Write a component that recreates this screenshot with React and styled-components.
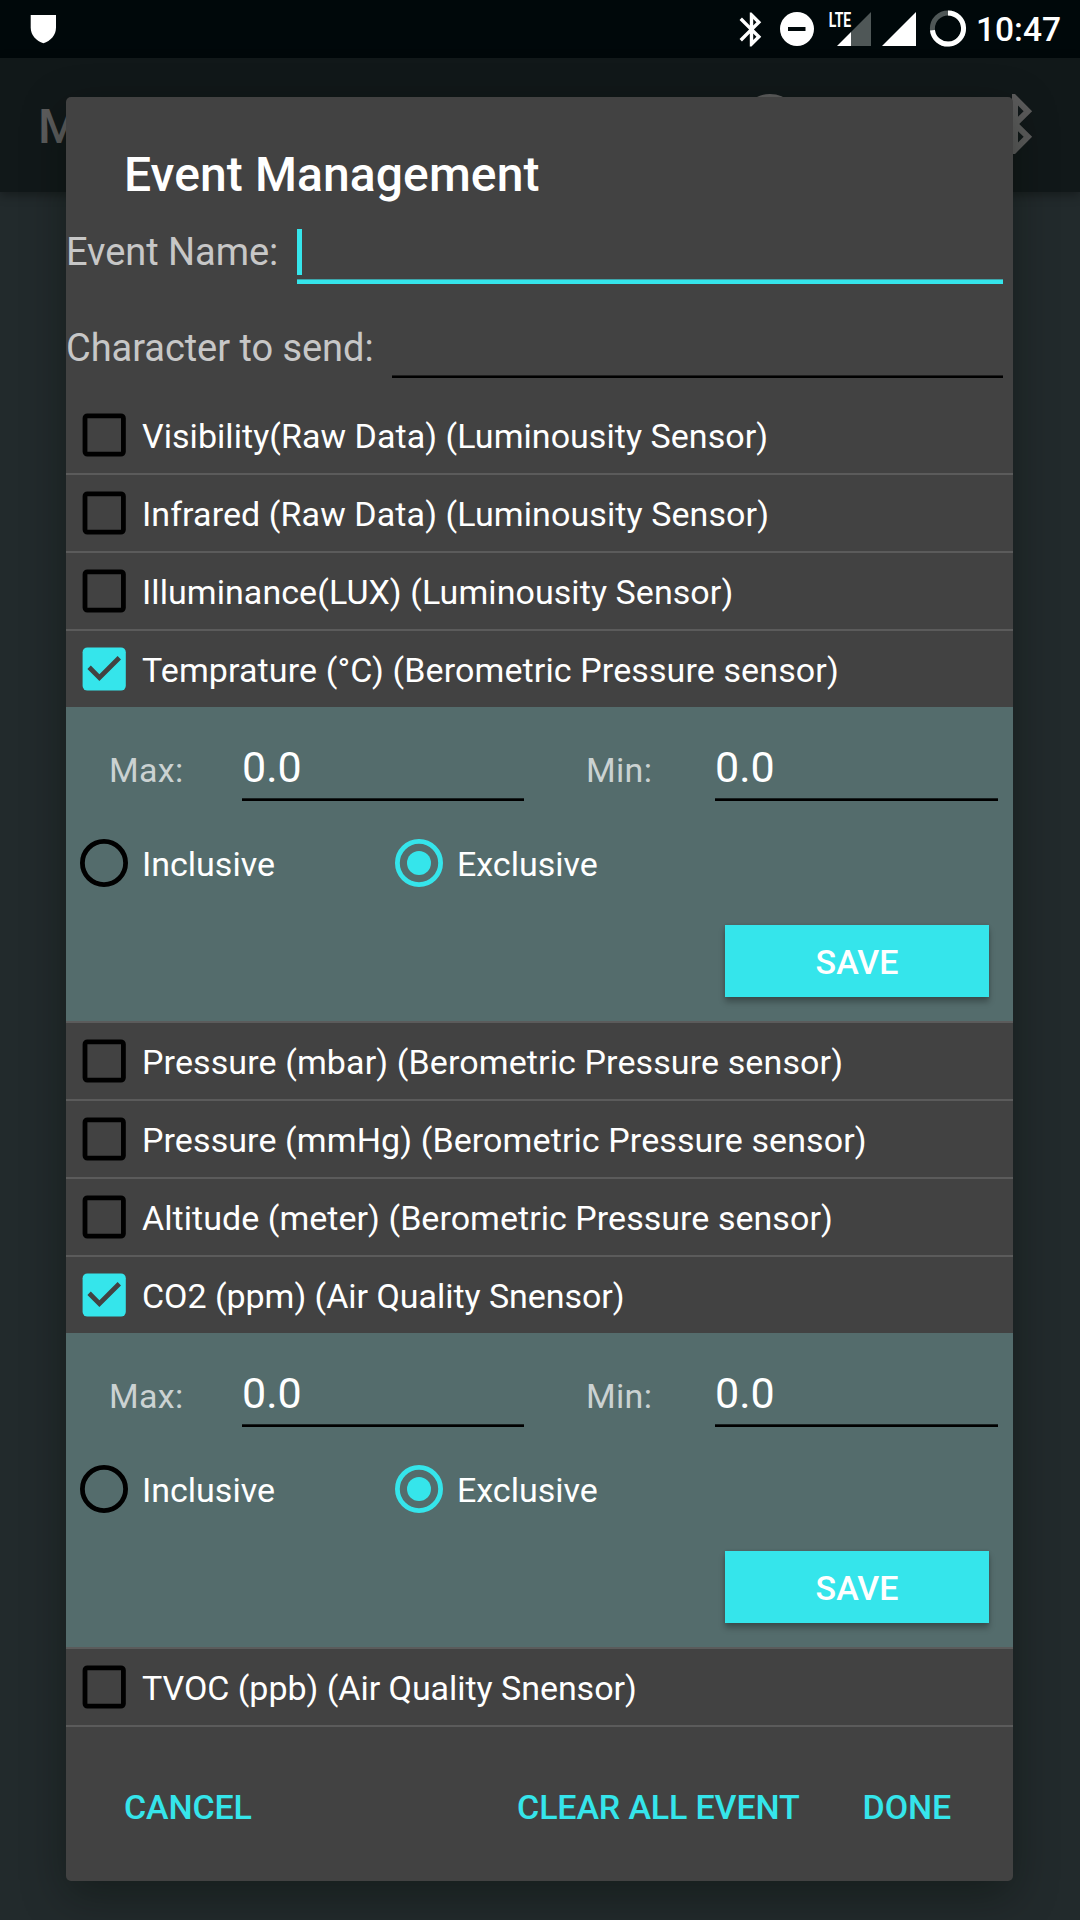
import React, { useState } from 'react';
import styled, { createGlobalStyle } from 'styled-components';

const accent = '#35e5eb';
const surface = '#424242';

const GlobalStyle = createGlobalStyle`
  * { box-sizing: border-box; }
  body {
    margin: 0;
    background: #222a2c;
    font-family: Roboto, "Noto Sans", sans-serif;
    color: #fff;
  }
`;

const Screen = styled.div`
  position: relative;
  width: 1080px;
  height: 1920px;
  overflow: hidden;
  background: #222a2c;
`;

const StatusBar = styled.header`
  display: flex;
  align-items: center;
  height: 58px;
  padding: 0 18px 0 30px;
  background: #00080a;
`;

const StatusIcons = styled.div`
  display: flex;
  align-items: center;
  height: 58px;
  margin-left: auto;
`;

const Clock = styled.time`
  margin-left: 9px;
  padding-top: 2px;
  width: 86px;
  font-size: 33.5px;
  line-height: 40px;
  font-weight: 500;
`;

const AppBar = styled.div`
  display: flex;
  align-items: center;
  height: 134px;
  padding: 0 29px 2px 37px;
  background: #111819;
  color: #5c5c5c;
  box-shadow: 0 3px 10px rgba(0, 0, 0, 0.35);
`;

const AppTitle = styled.h1`
  margin: 0;
  padding: 4px 0 0 1px;
  font-size: 48px;
  line-height: 57px;
  font-weight: 500;
`;

const AppActions = styled.div`
  display: flex;
  gap: 173px;
  margin-left: auto;
`;

const Overlay = styled.div`
  position: absolute;
  inset: 0;
  padding: 97px 67px 39px 66px;
`;

const Dialog = styled.section`
  height: 1784px;
  border-radius: 5px;
  background: ${surface};
  box-shadow: 0 14px 44px rgba(0, 10, 0, 0.36);
`;

const DialogTitle = styled.h2`
  margin: 0;
  padding: 49px 58px 0;
  font-size: 48px;
  line-height: 57px;
  font-weight: 500;
  letter-spacing: 0.1px;
`;

const Field = styled.label`
  display: flex;
  height: ${(p) => p.$height}px;
  padding-right: 10px;
`;

const FieldLabel = styled.span`
  width: ${(p) => p.$width}px;
  padding-top: 27px;
  font-size: 38px;
  line-height: 44px;
  letter-spacing: -0.05px;
  color: #c7c7c7;
  white-space: nowrap;
`;

const FieldInput = styled.div`
  flex: 1;
  height: ${(p) => (p.$active ? 81 : 79)}px;
  padding-top: 26px;
  background: ${(p) =>
    p.$active
      ? `linear-gradient(#3ca5a9 1px, ${accent} 1px) bottom / 100% 5px no-repeat`
      : 'linear-gradient(#1d1d1d 1px, #000 1px) bottom / 100% 3px no-repeat'};
`;

const Caret = styled.div`
  width: 5px;
  height: 46px;
  background: ${accent};
`;

const Item = styled.label`
  display: flex;
  align-items: center;
  gap: 16px;
  height: ${(p) => (p.$open ? 76 : 78)}px;
  padding-left: 16px;
  border-bottom: ${(p) => (p.$open ? 'none' : '2px solid #5b5b5b')};
`;

const ItemText = styled.span`
  padding-top: 2px;
  font-size: 34px;
  line-height: 40px;
  letter-spacing: ${(p) => p.$tracking || 0}px;
  white-space: nowrap;
`;

const Panel = styled.div`
  height: 316px;
  border-bottom: 2px solid #5b5b5b;
  background: #546c6c;
`;

const Limits = styled.div`
  display: flex;
  height: 94px;
`;

const LimitLabel = styled.span`
  width: ${(p) => p.$width}px;
  padding: 43px 0 0 ${(p) => p.$indent}px;
  font-size: 34px;
  line-height: 40px;
  letter-spacing: 0.3px;
  color: #cbd2d2;
`;

const LimitValue = styled.span`
  width: ${(p) => p.$width}px;
  padding-top: 35px;
  font-size: 43px;
  line-height: 50px;
  background: linear-gradient(#182020 1px, #000 1px) bottom / 100% 3px no-repeat;
`;

const Modes = styled.div`
  display: flex;
  padding: 38px 0 38px 14px;
`;

const Mode = styled.label`
  display: flex;
  align-items: center;
  gap: 14px;
  width: 315px;
  height: 48px;
`;

const SaveRow = styled.div`
  display: flex;
  justify-content: flex-end;
  padding-right: 24px;
`;

const SaveButton = styled.button`
  width: 264px;
  height: 72px;
  padding: 2px 0 0;
  border: 0;
  background: ${accent};
  color: #fff;
  font: 500 34px/40px Roboto, sans-serif;
  box-shadow: 0 5px 6px rgba(0, 0, 0, 0.28), 0 0 3px rgba(0, 0, 0, 0.12);
`;

const Footer = styled.footer`
  display: flex;
  padding: 60px 62px 0 58px;
`;

const TextButton = styled.button`
  margin-left: ${(p) => p.$before || '0'};
  padding: 0;
  border: 0;
  background: none;
  color: ${accent};
  font: 500 34px/40px Roboto, sans-serif;
  letter-spacing: -0.14px;
  white-space: nowrap;
`;

const Drawing = styled.svg`
  display: block;
  flex: none;
  overflow: visible;
  margin-left: ${(p) => p.$before || 0}px;
`;

const BluetoothIcon = ({ size, before }) => (
  <Drawing $before={before} width={size} height={size} viewBox="0 0 24 24" fill="currentColor">
    <path d="M17.71 7.71L12 2h-1v7.59L6.41 5 5 6.41 10.59 12 5 17.59 6.41 19 11 14.41V22h1l5.71-5.71-4.3-4.29 4.3-4.29zM13 5.83l1.88 1.88L13 9.59V5.83zm1.88 10.46L13 18.17v-3.76l1.88 1.88z" />
  </Drawing>
);

const ShieldIcon = () => (
  <Drawing width="26" height="30" viewBox="0 0 26 30" fill="#fff">
    <path d="M.7 1H26v12.500C26 21.500 20.500 26.800 13.400 29.300 6.300 26.800.7 21.500.7 13.500z" />
  </Drawing>
);

const DndIcon = () => (
  <Drawing $before={8} width="34" height="34" viewBox="0 0 34 34">
    <circle cx="17" cy="17" r="17" fill="#fff" />
    <path d="M8 15h17.500v4H8z" fill="#00080a" />
  </Drawing>
);

const LteIcon = () => (
  <Drawing $before={14} width="44" height="46" viewBox="0 -6 44 46">
    <path d="M43 0V34H23V20z" fill="#4f5757" />
    <path d="M9 34L23 20V34z" fill="#fff" />
    <text x="0.700" y="15.300" fill="#fff" fontSize="20.500" fontWeight="700" textLength="22.500" lengthAdjust="spacingAndGlyphs">LTE</text>
  </Drawing>
);

const SignalIcon = () => (
  <Drawing $before={10} width="34" height="34" viewBox="0 0 34 34">
    <path d="M34 0V34H0z" fill="#fff" />
  </Drawing>
);

const BatteryIcon = () => (
  <Drawing $before={13} width="38" height="38" viewBox="0 0 38 38" fill="none" strokeWidth="5">
    <circle cx="19" cy="18.500" r="15.600" stroke="#4f5757" />
    <path d="M19 2.900A15.600 15.600 0 1 1 3.450 20.200" stroke="#fff" />
  </Drawing>
);

const InfoIcon = () => (
  <Drawing width="72" height="72" viewBox="0 0 24 24" fill="none" stroke="currentColor" strokeWidth="2">
    <circle cx="12" cy="12" r="9" />
  </Drawing>
);

const Checkbox = ({ checked }) => (
  <Drawing width="44" height="44" viewBox="0 0 44 44">
    {checked ? (
      <>
        <rect x=".6" y=".4" width="43.200" height="43.200" rx="4.800" fill={accent} />
        <path d="M17.400 34L5.400 22l3.400-3.400 8.600 8.600L35.600 9 39 12.400z" fill={surface} />
      </>
    ) : (
      <rect x="3" y="2.800" width="38.400" height="38.400" rx="2.400" fill="none" stroke="#000" strokeWidth="4.800" />
    )}
  </Drawing>
);

const Radio = ({ checked }) => (
  <Drawing width="48" height="48" viewBox="0 0 48 48">
    <circle cx="24" cy="24" r="21.600" fill="none" stroke={checked ? accent : '#000'} strokeWidth="4.800" />
    {checked && <circle cx="24" cy="24" r="12" fill={accent} />}
  </Drawing>
);

const ThresholdPanel = () => (
  <Panel>
    <Limits>
      <LimitLabel $width={176} $indent={43}>Max:</LimitLabel>
      <LimitValue $width={282}>0.0</LimitValue>
      <LimitLabel $width={191} $indent={62}>Min:</LimitLabel>
      <LimitValue $width={283}>0.0</LimitValue>
    </Limits>
    <Modes>
      <Mode><Radio /><ItemText>Inclusive</ItemText></Mode>
      <Mode><Radio checked /><ItemText>Exclusive</ItemText></Mode>
    </Modes>
    <SaveRow><SaveButton>SAVE</SaveButton></SaveRow>
  </Panel>
);

const sensors = [
  { name: 'Visibility(Raw Data) (Luminousity Sensor)', tracking: 0.045 },
  { name: 'Infrared (Raw Data) (Luminousity Sensor)', tracking: 0.09 },
  { name: 'Illuminance(LUX) (Luminousity Sensor)', tracking: 0.065 },
  { name: 'Temprature (°C) (Berometric Pressure sensor)', tracking: 0.11, on: true },
  { name: 'Pressure (mbar) (Berometric Pressure sensor)', tracking: 0.11 },
  { name: 'Pressure (mmHg) (Berometric Pressure sensor)', tracking: 0.1 },
  { name: 'Altitude (meter) (Berometric Pressure sensor)', tracking: 0.04 },
  { name: 'CO2 (ppm) (Air Quality Snensor)', tracking: -0.04, on: true },
  { name: 'TVOC (ppb) (Air Quality Snensor)', tracking: -0.04 },
];

export default function App() {
  const [open, setOpen] = useState(() => sensors.map((s) => Boolean(s.on)));
  const toggle = (i) => setOpen((prev) => prev.map((v, j) => (j === i ? !v : v)));

  return (
    <>
      <GlobalStyle />
      <Screen>
        <StatusBar>
          <ShieldIcon />
          <StatusIcons>
            <BluetoothIcon size={41} />
            <DndIcon />
            <LteIcon />
            <SignalIcon />
            <BatteryIcon />
            <Clock>10:47</Clock>
          </StatusIcons>
        </StatusBar>
        <AppBar>
          <AppTitle>M</AppTitle>
          <AppActions>
            <InfoIcon />
            <BluetoothIcon size={72} />
          </AppActions>
        </AppBar>
        <Overlay>
          <Dialog>
            <DialogTitle>Event Management</DialogTitle>
            <Field $height={96}>
              <FieldLabel $width={231}>Event Name:</FieldLabel>
              <FieldInput $active><Caret /></FieldInput>
            </Field>
            <Field $height={98}>
              <FieldLabel $width={326}>Character to send:</FieldLabel>
              <FieldInput />
            </Field>
            {sensors.map((s, i) => (
              <React.Fragment key={s.name}>
                <Item $open={open[i]} onClick={() => toggle(i)}>
                  <Checkbox checked={open[i]} />
                  <ItemText $tracking={s.tracking}>{s.name}</ItemText>
                </Item>
                {open[i] && <ThresholdPanel />}
              </React.Fragment>
            ))}
            <Footer>
              <TextButton>CANCEL</TextButton>
              <TextButton $before="auto">CLEAR ALL EVENT</TextButton>
              <TextButton $before="63px">DONE</TextButton>
            </Footer>
          </Dialog>
        </Overlay>
      </Screen>
    </>
  );
}
